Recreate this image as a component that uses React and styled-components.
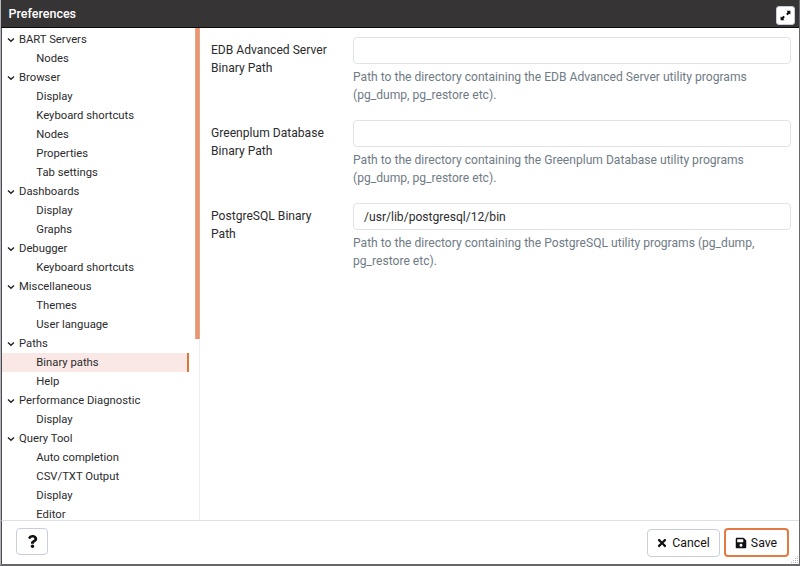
import React from "react";
import styled, { createGlobalStyle } from "styled-components";
import { FaQuestion, FaTimes, FaSave } from "react-icons/fa";

const GlobalStyle = createGlobalStyle`
  *, *::before, *::after { box-sizing: border-box; }
  body { margin: 0; font-family: Roboto, "Liberation Sans", sans-serif; color: #2b2b2e; }
`;

const Dialog = styled.div`
  position: relative;
  display: flex;
  flex-direction: column;
  width: 800px;
  height: 566px;
  overflow: hidden;
  background: #fff;
  border: solid #66676b;
  border-width: 0 1px 2px 1px;
  border-left-color: #b5b7bc;
`;

const TitleBar = styled.header`
  display: flex;
  flex: 0 0 28px;
  align-items: center;
  justify-content: space-between;
  padding: 0 4px 0 7.5px;
  background: #363435;
  border-bottom: 1px solid #0b0b0b;
  color: #fff;
`;

const Title = styled.h1`
  margin: 0;
  font-size: 12.5px;
  font-weight: 500;
  line-height: 25px;
`;

const MaximizeButton = styled.button`
  display: flex;
  align-items: center;
  justify-content: center;
  width: 19px;
  height: 19px;
  margin-top: 4px;
  padding: 0;
  background: #fff;
  border: 1px solid #c9cddb;
  border-radius: 3px;
`;

const Body = styled.main`
  display: flex;
  flex: 0 0 492px;
  min-height: 0;
  border-left: 1px solid #4a4b50;
`;

const Sidebar = styled.nav`
  display: flex;
  flex: 0 0 198px;
  overflow: hidden;
  box-shadow: inset -1px 0 #ebeef3;
`;

const Tree = styled.ul`
  flex: 0 0 193px;
  margin: 0;
  padding: 2px 6px 0 0;
  list-style: none;
`;

const TreeItem = styled.li`
  display: flex;
  align-items: center;
  height: 19px;
  padding-left: ${(p) => (p.$leaf ? "34.3px" : "5px")};
  background: ${(p) => (p.$selected ? "#f9e8e5" : "transparent")};
  border-right: 2px solid ${(p) => (p.$selected ? "#dd7438" : "transparent")};
  font-size: 11.28px;
  line-height: 19px;
  white-space: nowrap;
`;

const Arrow = styled.svg`
  flex: 0 0 8px;
  margin-right: 4px;
`;

const ScrollTrack = styled.div`
  width: 5px;
`;

const ScrollThumb = styled.div`
  height: 311px;
  background: #ea9470;
  border: solid #e3a58c;
  border-width: 0 1px;
`;

const Form = styled.section`
  flex: 1;
  padding: 9px 8px 0 11px;
`;

const Field = styled.div`
  display: grid;
  grid-template-columns: 142px 1fr;
  height: 83px;
`;

const Label = styled.label`
  padding: 4px 20px 0 0;
  font-size: 12.1px;
  line-height: 18px;
`;

const Input = styled.input`
  display: block;
  width: 100%;
  height: 27px;
  padding: 0 10px;
  background: #fff;
  border: 1px solid #dfe2e6;
  border-radius: 4px;
  color: #2b2b2e;
  font: 12.1px Roboto, "Liberation Sans", sans-serif;
  outline: none;
`;

const Help = styled.p`
  margin: 4px 0 0;
  color: #6f7b85;
  font-size: 12.1px;
  line-height: 18px;
`;

const Footer = styled.footer`
  display: flex;
  flex: 1;
  align-items: flex-start;
  gap: 4px;
  padding: 7px 10px 0 14px;
  border-top: 1px solid #dde0e8;
  border-left: 1px solid #4a4b50;
`;

const Button = styled.button`
  display: flex;
  align-items: center;
  justify-content: center;
  gap: 4px;
  width: ${(p) => p.$width}px;
  height: ${(p) => p.$height}px;
  padding: 0 ${(p) => (p.$first ? 0 : 1)}px 0 0;
  margin-top: ${(p) => p.$offset || 0}px;
  margin-right: ${(p) => (p.$first ? "auto" : 0)};
  background: #fff;
  border: ${(p) => (p.$primary ? "2px solid #e47a43" : "1px solid #c9cedb")};
  border-radius: 4px;
  color: #111;
  font: 12.3px Roboto, "Liberation Sans", sans-serif;
`;

const ResizeGrip = styled.svg`
  position: absolute;
  right: 0;
  bottom: 0;
`;

const groups = [
  ["BART Servers", ["Nodes"]],
  ["Browser", ["Display", "Keyboard shortcuts", "Nodes", "Properties", "Tab settings"]],
  ["Dashboards", ["Display", "Graphs"]],
  ["Debugger", ["Keyboard shortcuts"]],
  ["Miscellaneous", ["Themes", "User language"]],
  ["Paths", ["Binary paths", "Help"]],
  ["Performance Diagnostic", ["Display"]],
  ["Query Tool", ["Auto completion", "CSV/TXT Output", "Display", "Editor"]],
];

const fields = [
  { label: "EDB Advanced Server Binary Path", product: "EDB Advanced Server", value: "" },
  { label: "Greenplum Database Binary Path", product: "Greenplum Database", value: "" },
  { label: "PostgreSQL Binary Path", product: "PostgreSQL", value: "/usr/lib/postgresql/12/bin" },
];

export default function App() {
  return (
    <>
      <GlobalStyle />
      <Dialog>
        <TitleBar>
          <Title>Preferences</Title>
          <MaximizeButton aria-label="Maximize">
            <svg width="11" height="11" viewBox="0 0 11 11" fill="#111">
              <path d="M6.6 0.7H10.4V4.4L9.3 3.7L7.4 5.2L6.2 4L7.6 2ZM4.4 10.3H0.6V6.6L1.7 7.3L3.6 5.8L4.8 7L3.4 9Z" />
            </svg>
          </MaximizeButton>
        </TitleBar>
        <Body>
          <Sidebar>
            <Tree>
              {groups.map(([name, children]) => (
                <React.Fragment key={name}>
                  <TreeItem>
                    <Arrow width="8" height="8" viewBox="0 0 8 8" fill="none" stroke="#222" strokeWidth="1.4">
                      <path d="M1 2.5L4 5.3L7 2.5" />
                    </Arrow>
                    {name}
                  </TreeItem>
                  {children.map((child) => (
                    <TreeItem key={child} $leaf $selected={child === "Binary paths"}>
                      {child}
                    </TreeItem>
                  ))}
                </React.Fragment>
              ))}
            </Tree>
            <ScrollTrack>
              <ScrollThumb />
            </ScrollTrack>
          </Sidebar>
          <Form>
            {fields.map((f) => (
              <Field key={f.product}>
                <Label>{f.label}</Label>
                <div>
                  <Input defaultValue={f.value} aria-label={f.label} />
                  <Help>
                    {`Path to the directory containing the ${f.product} utility programs (pg_dump, pg_restore etc).`}
                  </Help>
                </div>
              </Field>
            ))}
          </Form>
        </Body>
        <Footer>
          <Button $width={32} $height={27} $first aria-label="Help">
            <FaQuestion size={13} />
          </Button>
          <Button $width={73} $height={28} $offset={1}>
            <FaTimes size={12} />
            Cancel
          </Button>
          <Button $width={65} $height={29} $primary>
            <FaSave size={12} />
            Save
          </Button>
        </Footer>
        <ResizeGrip width="9" height="9" viewBox="0 0 9 9" fill="#b8b8b8">
          <path d="M7 1h1v1h-1zM5 3h1v1h-1zM7 3h1v1h-1zM3 5h1v1h-1zM5 5h1v1h-1zM7 5h1v1h-1zM1 7h1v1h-1zM3 7h1v1h-1zM5 7h1v1h-1zM7 7h1v1h-1z" />
        </ResizeGrip>
      </Dialog>
    </>
  );
}
